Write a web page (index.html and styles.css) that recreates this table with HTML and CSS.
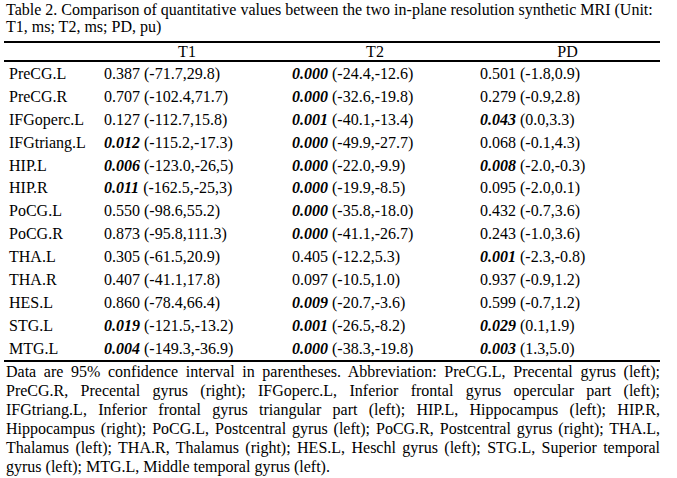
FILE: index.html
```html
<!DOCTYPE html>
<html>
<head>
<meta charset="utf-8">
<link rel="stylesheet" href="styles.css">
</head>
<body>
<div class="page">
  <p class="caption">Table 2. Comparison of quantitative values between the two in-plane resolution synthetic MRI (Unit: T1, ms; T2, ms; PD, pu)</p>
  <table class="data">
    <thead>
      <tr><th class="lab"></th><th class="shift">T1</th><th class="shift">T2</th><th>PD</th></tr>
    </thead>
    <tbody>
      <tr><td class="lab">PreCG.L</td><td>0.387 (-71.7,29.8)</td><td><b>0.000</b> (-24.4,-12.6)</td><td>0.501 (-1.8,0.9)</td></tr>
      <tr><td class="lab">PreCG.R</td><td>0.707 (-102.4,71.7)</td><td><b>0.000</b> (-32.6,-19.8)</td><td>0.279 (-0.9,2.8)</td></tr>
      <tr><td class="lab">IFGoperc.L</td><td>0.127 (-112.7,15.8)</td><td><b>0.001</b> (-40.1,-13.4)</td><td><b>0.043</b> (0.0,3.3)</td></tr>
      <tr><td class="lab">IFGtriang.L</td><td><b>0.012</b> (-115.2,-17.3)</td><td><b>0.000</b> (-49.9,-27.7)</td><td>0.068 (-0.1,4.3)</td></tr>
      <tr><td class="lab">HIP.L</td><td><b>0.006</b> (-123.0,-26,5)</td><td><b>0.000</b> (-22.0,-9.9)</td><td><b>0.008</b> (-2.0,-0.3)</td></tr>
      <tr><td class="lab">HIP.R</td><td><b>0.011</b> (-162.5,-25,3)</td><td><b>0.000</b> (-19.9,-8.5)</td><td>0.095 (-2.0,0.1)</td></tr>
      <tr><td class="lab">PoCG.L</td><td>0.550 (-98.6,55.2)</td><td><b>0.000</b> (-35.8,-18.0)</td><td>0.432 (-0.7,3.6)</td></tr>
      <tr><td class="lab">PoCG.R</td><td>0.873 (-95.8,111.3)</td><td><b>0.000</b> (-41.1,-26.7)</td><td>0.243 (-1.0,3.6)</td></tr>
      <tr><td class="lab">THA.L</td><td>0.305 (-61.5,20.9)</td><td>0.405 (-12.2,5.3)</td><td><b>0.001</b> (-2.3,-0.8)</td></tr>
      <tr><td class="lab">THA.R</td><td>0.407 (-41.1,17.8)</td><td>0.097 (-10.5,1.0)</td><td>0.937 (-0.9,1.2)</td></tr>
      <tr><td class="lab">HES.L</td><td>0.860 (-78.4,66.4)</td><td><b>0.009</b> (-20.7,-3.6)</td><td>0.599 (-0.7,1.2)</td></tr>
      <tr><td class="lab">STG.L</td><td><b>0.019</b> (-121.5,-13.2)</td><td><b>0.001</b> (-26.5,-8.2)</td><td><b>0.029</b> (0.1,1.9)</td></tr>
      <tr><td class="lab">MTG.L</td><td><b>0.004</b> (-149.3,-36.9)</td><td><b>0.000</b> (-38.3,-19.8)</td><td><b>0.003</b> (1.3,5.0)</td></tr>
    </tbody>
  </table>
  <p class="note">Data are 95% confidence interval in parentheses. Abbreviation: PreCG.L, Precental gyrus (left); PreCG.R, Precental gyrus (right); IFGoperc.L, Inferior frontal gyrus opercular part (left); IFGtriang.L, Inferior frontal gyrus triangular part (left); HIP.L, Hippocampus (left); HIP.R, Hippocampus (right); PoCG.L, Postcentral gyrus (left); PoCG.R, Postcentral gyrus (right); THA.L, Thalamus (left); THA.R, Thalamus (right); HES.L, Heschl gyrus (left); STG.L, Superior temporal gyrus (left); MTG.L, Middle temporal gyrus (left).</p>
</div>
</body>
</html>
```

FILE: styles.css
```css
html, body {
  margin: 0;
  padding: 0;
  background: #ffffff;
}

.page {
  width: 656px;
  margin-left: 4px;
  padding-top: 1px;
  font-family: "Liberation Serif", "Times New Roman", serif;
  font-size: 16px;
  color: #000000;
}

.caption {
  margin: 0;
  padding-left: 2px;
  line-height: 17px;
}

.data {
  width: 656px;
  margin-top: 6px;
  border-collapse: collapse;
  border-top: 2px solid #000;
  border-bottom: 2px solid #000;
}

.data th {
  font-weight: normal;
  text-align: center;
  height: 17px;
  padding: 0;
  line-height: 17px;
  border-bottom: 2px solid #000;
}

.data th.shift {
  padding-right: 12px;
}

.data td {
  height: 22.9px;
  padding: 0 0 0 5px;
  line-height: 17px;
  white-space: nowrap;
  vertical-align: middle;
}

.data .lab {
  width: 90px;
}

.data td:nth-child(2),
.data td:nth-child(3) {
  width: 183px;
}

.data b {
  font-style: italic;
  font-weight: bold;
}

.note {
  margin: 0;
  padding: 0 0 0 2px;
  text-align: justify;
  line-height: 19px;
}
```
